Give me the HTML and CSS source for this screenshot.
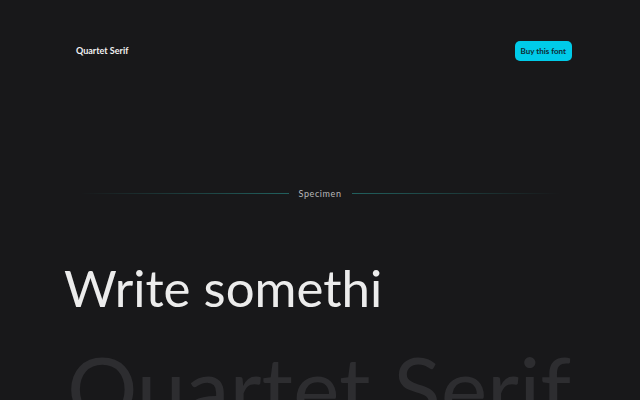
FILE: index.html
```html
<!DOCTYPE html>
<html lang="en">
<head>
    <meta charset="UTF-8">
    <title>Quartet Serif</title>
    <link rel="stylesheet" href="styles.css">
</head>
<body>
<div class="page">
    <div class="nav">
        <div class="logo">Quartet Serif</div>
        <a class="buy" href="#">Buy this font</a>
    </div>

    <div class="divider">
        <span class="line left"></span>
        <span class="label">Specimen</span>
        <span class="line right"></span>
    </div>

    <div class="specimen">
        <div class="typer">Write somethi</div>
        <div class="ghost">Quartet Serif</div>
    </div>
</div>
</body>
</html>
```

FILE: styles.css
```css
html, body{
    margin: 0;
    height: 100%;
    overflow: hidden;
}
body{
    background: #18181a;
    color: #ececec;
    font-family: "Lato", "Noto Sans", sans-serif;
}
.page{
    padding: 0 68px 0 76px;
}
.nav{
    display: flex;
    justify-content: space-between;
    align-items: center;
    padding-top: 40px;
    height: 21px;
}
.logo{
    font-size: 9px;
    font-weight: 700;
    color: #f2f2f2;
}
.buy{
    display: block;
    background: #00cbe9;
    color: #0f2a33;
    text-decoration: none;
    font-size: 8px;
    font-weight: 700;
    line-height: 20px;
    padding: 0 6px;
    border-radius: 5px;
}
.divider{
    display: flex;
    align-items: center;
    gap: 10px;
    margin: 127px 12px 0 4px;
}
.line{
    flex: 1;
    height: 1px;
}
.line.left{
    background: linear-gradient(to right, rgba(60,90,90,0), #21605e);
}
.line.right{
    background: linear-gradient(to left, rgba(60,90,90,0), #21605e);
}
.label{
    font-size: 9px;
    letter-spacing: 0.6px;
    color: #b9b9bb;
}
.specimen{
    margin-left: -12px;
    padding-top: 59px;
}
.typer{
    font-size: 51px;
    font-weight: 400;
    line-height: 60px;
    color: #ececec;
}
.ghost{
    font-size: 88px;
    line-height: 100px;
    margin: 19px 0 0 3px;
    color: #2d2d30;
    white-space: nowrap;
}
```
